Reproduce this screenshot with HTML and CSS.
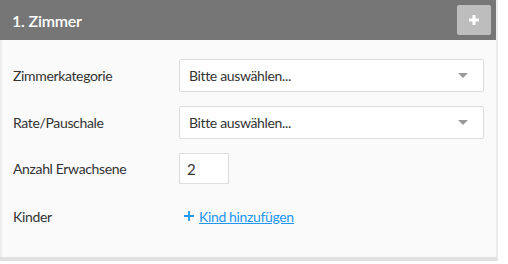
FILE: index.html
```html
<!DOCTYPE html>
<html>
  <head>
    <title>Zimmer</title>
    <link rel="stylesheet" href="styles.css">
  </head>
  <body>
    <div class="panel">

      <div class="panel-head">
        <p class="panel-title">1. Zimmer</p>
        <button class="add-button">
          <svg width="12" height="12" viewBox="0 0 12 12">
            <path d="M6 1v10M1 6h10" stroke="white" stroke-width="3"/>
          </svg>
        </button>
      </div>

      <div class="panel-body">
        <div class="row">
          <span class="label">Zimmerkategorie</span>
          <div class="select">
            <span>Bitte auswählen...</span>
            <span class="caret"></span>
          </div>
        </div>

        <div class="row">
          <span class="label">Rate/Pauschale</span>
          <div class="select">
            <span>Bitte auswählen...</span>
            <span class="caret"></span>
          </div>
        </div>

        <div class="row">
          <span class="label">Anzahl Erwachsene</span>
          <div class="number-input">2</div>
        </div>

        <div class="row row-link">
          <span class="label">Kinder</span>
          <a href="#" class="add-link">
            <svg width="12" height="12" viewBox="0 0 12 12">
              <path d="M6 1v10M1 6h10" stroke="#2196f3" stroke-width="1.8"/>
            </svg>
            <span class="add-text">Kind hinzufügen</span>
          </a>
        </div>
      </div>

    </div>
  </body>
</html>
```

FILE: styles.css
```css
body {
  margin: 0;
  background-color: white;
  font-family: Lato, "Open Sans", sans-serif;
  color: rgb(51, 51, 51);
}

.panel {
  width: 496px;
  border-right: 2px solid rgb(234, 234, 234);
  border-bottom: 4px solid rgb(224, 224, 224);
}

.panel-head {
  display: flex;
  align-items: center;
  justify-content: space-between;
  height: 40px;
  padding: 0 5px 0 12px;
  background-color: rgb(118, 118, 118);
}

.panel-title {
  margin: 0;
  color: white;
  font-size: 16px;
  font-weight: 600;
  letter-spacing: -0.2px;
}

.add-button {
  display: flex;
  align-items: center;
  justify-content: center;
  width: 34px;
  height: 30px;
  padding: 0;
  border: none;
  border-radius: 2px;
  background-color: rgb(189, 189, 189);
}

.panel-body {
  display: flex;
  flex-direction: column;
  gap: 14px;
  padding: 19px 12px 25px 11px;
  background-color: rgb(250, 250, 250);
  border-left: 2px solid rgb(238, 238, 238);
}

.row {
  display: flex;
  align-items: center;
  font-size: 14px;
  letter-spacing: -0.35px;
}

.row-link {
  height: 32px;
  margin-top: 2px;
}

.label {
  width: 166px;
  flex-shrink: 0;
}

.select {
  display: flex;
  align-items: center;
  justify-content: space-between;
  flex: 1;
  height: 31px;
  padding: 0 15px 0 9px;
  background-color: white;
  border: 1px solid rgb(221, 221, 221);
  border-radius: 2px;
}

.caret {
  width: 0;
  height: 0;
  border-left: 5px solid transparent;
  border-right: 5px solid transparent;
  border-top: 5px solid rgb(153, 153, 153);
}

.number-input {
  display: flex;
  align-items: center;
  width: 41px;
  height: 29px;
  padding-left: 7px;
  background-color: white;
  border: 1px solid rgb(221, 221, 221);
  font-size: 15px;
}

.add-link {
  display: flex;
  align-items: center;
  gap: 4px;
  margin-left: 4px;
  color: rgb(33, 150, 243);
}

.add-text {
  text-decoration: underline;
}
```
